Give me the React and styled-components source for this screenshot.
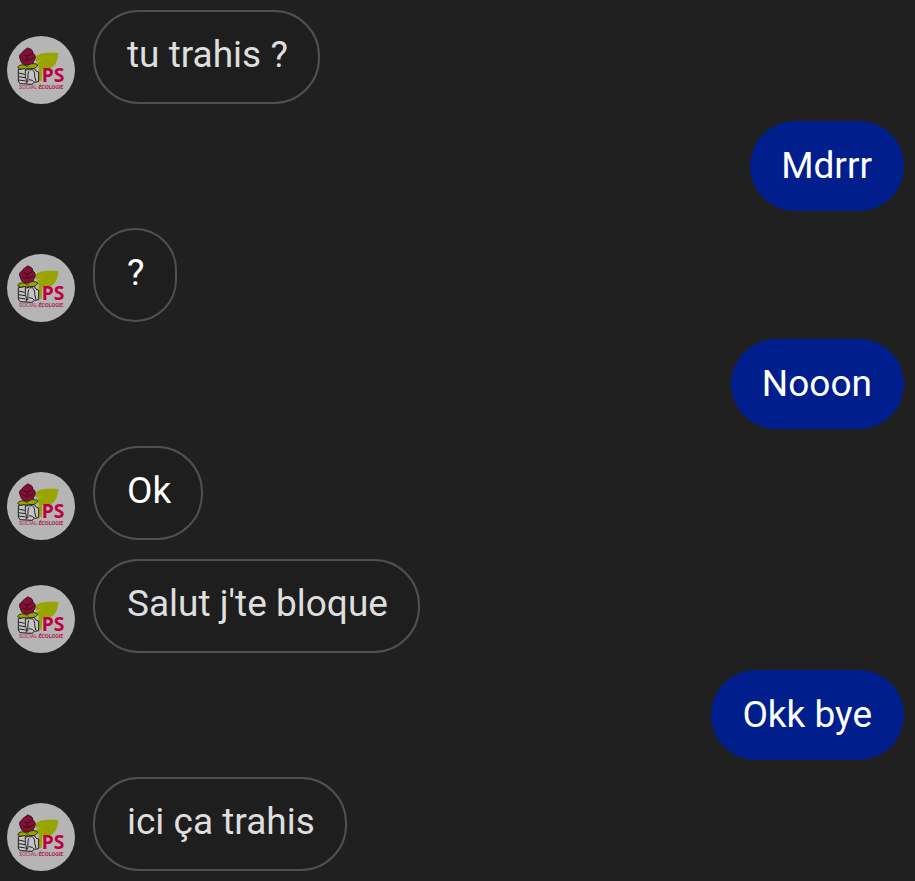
import React from 'react';
import styled, { createGlobalStyle } from 'styled-components';

const mensagens = [
    { id: 1, texto: 'tu trahis ?', cor: '#DEDEDE' },
    { id: 2, texto: 'Mdrrr', enviada: true },
    { id: 3, texto: '?', cor: '#FFFFFF' },
    { id: 4, texto: 'Nooon', enviada: true },
    { id: 5, texto: 'Ok', cor: '#FFFFFF' },
    { id: 6, texto: "Salut j'te bloque", cor: '#DEDEDE' },
    { id: 7, texto: 'Okk bye', enviada: true },
    { id: 8, texto: 'ici ça trahis', cor: '#DEDEDE' },
];

function Avatar() {
    return (
        <Logo viewBox="0 0 204 204" aria-hidden="true">
            <circle cx="102" cy="102" r="102" fill="#B5B5B5" />

            {/* folha */}
            <path d="M84 64 C98 48 124 50 154 51 C153 76 142 98 120 99 L106 99 L104 135 L97 135 L95 92 C88 88 86 82 92 79 L108 71 L88 77 Z" fill="#98A500" />

            {/* rosa */}
            <path d="M41 72 C34 60 40 52 47 50 C48 42 56 43 61 36 C70 38 78 42 77 51 C87 56 86 69 80 76 C79 84 71 88 62 87 C52 89 43 84 41 72 Z" fill="#860E35" stroke="#2A101B" strokeWidth="3" />
            <path d="M50 56 C57 61 69 60 74 53 M47 69 C54 75 70 74 78 65 M62 59 L60 70" fill="none" stroke="#32101E" strokeWidth="3" />
            <path d="M32 93 C40 84 53 85 60 92 C66 82 84 80 92 87 C89 97 74 101 63 96 C51 103 35 102 32 93 Z" fill="#98A500" stroke="#303008" strokeWidth="3" />

            {/* punho */}
            <path d="M34 101 L52 98 L59 102 L68 99 L82 98 L88 106 L95 108 L95 137 L82 139 L75 145 L39 143 L34 135 Z" fill="#C4C4C4" stroke="#1C1C1C" strokeWidth="3" strokeLinejoin="round" />
            <path d="M35 111 L53 115 M35 122 L54 125 M36 132 L56 135 M55 101 L55 122 L59 134 L57 143 M65 106 C61 118 64 130 62 139 M68 103 C76 97 84 105 83 121 L87 136 M66 131 L76 133 L82 139" fill="none" stroke="#202020" strokeWidth="3" strokeLinejoin="round" />

            <text>
                <Sigla x="104" y="138">PS</Sigla>
                <Lema x="36" y="158">SOCIAL-<tspan fontWeight="700">ÉCOLOGIE</tspan></Lema>
            </text>
        </Logo>
    )
}

export default function App() {
    return (
        <>
            <EstiloGlobal />
            <Conversa>
                {mensagens.map(mensagem =>
                <Mensagem key={mensagem.id} enviada={mensagem.enviada} cor={mensagem.cor}>
                    {mensagem.texto}
                </Mensagem>)}
            </Conversa>
        </>
    )
}

function Mensagem({ enviada, cor, children }) {
    return enviada
        ?
            <LinhaEnviada><BalaoEnviado>{children}</BalaoEnviado></LinhaEnviada>
        :
            <LinhaRecebida>
                <Avatar />
                <BalaoRecebido $cor={cor}>{children}</BalaoRecebido>
            </LinhaRecebida>
}

const EstiloGlobal = createGlobalStyle`
    * {
        box-sizing: border-box;
    }

    body {
        margin: 0;
        background-color: #202020;
        font-family: Roboto, sans-serif;
    }
`
const Conversa = styled.main`
    display: flex;
    flex-direction: column;
    gap: 17px;
    padding: 10px 11px 10px 7px;
`
const Linha = styled.div`
    display: flex;
    align-items: flex-end;
`
const LinhaEnviada = styled(Linha)`
    justify-content: flex-end;
`
const LinhaRecebida = styled(Linha)`
    gap: 18px;

    & + & {
        margin-top: 2px;
    }
`
const Balao = styled.p`
    margin: 0;
    border-radius: 46px;
    font-size: 37px;
    line-height: 44px;
    overflow-wrap: anywhere;
`
const BalaoEnviado = styled(Balao)`
    padding: 23px 32px 23px 31px;
    background-color: #001F8C;
    color: #FFFFFF;
`
const BalaoRecebido = styled(Balao)`
    padding: 21px 30px 25px 32px;
    border: 2px solid #505050;
    background-color: #1E1E1E;
    color: ${props => props.$cor};
`
const Logo = styled.svg`
    width: 68px;
    height: 68px;
    flex-shrink: 0;
`
const Sigla = styled.tspan`
    font-family: 'Noto Sans', sans-serif;
    font-size: 58px;
    font-weight: 700;
    fill: #BC0040;
`
const Lema = styled.tspan`
    font-family: Roboto, sans-serif;
    font-size: 16px;
    fill: #B02050;
`
